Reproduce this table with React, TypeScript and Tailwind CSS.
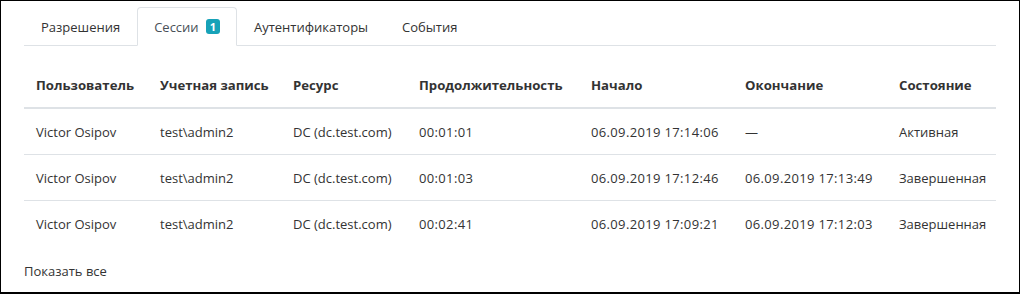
const tabs = [
  { label: "Разрешения" },
  { label: "Сессии", badge: 1, active: true },
  { label: "Аутентификаторы" },
  { label: "События" },
];

const columns = [
  { title: "Пользователь", width: "w-[124px]" },
  { title: "Учетная запись", width: "w-[133px]" },
  { title: "Ресурс", width: "w-[126px]" },
  { title: "Продолжительность", width: "w-[172px]" },
  { title: "Начало", width: "w-[154px]" },
  { title: "Окончание", width: "w-[154px]" },
  { title: "Состояние", width: "" },
];

const sessions = [
  ["Victor Osipov", "test\\admin2", "DC (dc.test.com)", "00:01:01", "06.09.2019 17:14:06", "—", "Активная"],
  ["Victor Osipov", "test\\admin2", "DC (dc.test.com)", "00:01:03", "06.09.2019 17:12:46", "06.09.2019 17:13:49", "Завершенная"],
  ["Victor Osipov", "test\\admin2", "DC (dc.test.com)", "00:02:41", "06.09.2019 17:09:21", "06.09.2019 17:12:03", "Завершенная"],
];

// digit columns render a bit wider in the original font
const numericCols = [3, 4, 5];

export default function App() {
  return (
    <div className="h-[294px] w-[1020px] overflow-hidden border-t border-l border-r border-b-2 border-black bg-white px-[23px] pt-[6px] font-['Open_Sans',sans-serif] text-[13px] text-[#333]">
      <ul className="flex border-b border-[#dee2e6]">
        {tabs.map((tab) => (
          <li
            key={tab.label}
            className={`-mb-px flex h-[39px] items-center gap-[7px] rounded-t border px-4 pt-[2px] ${
              tab.active
                ? "border-[#dee2e6] border-b-white bg-white text-[#495057]"
                : "border-transparent text-[#333]"
            }`}
          >
            <span>{tab.label}</span>
            {tab.badge ? (
              <span className="-mt-[2px] flex h-[15px] min-w-[14px] items-center justify-center rounded-[3px] bg-[#17a2b8] px-1 text-[11px] font-bold leading-none text-white">
                {tab.badge}
              </span>
            ) : null}
          </li>
        ))}
      </ul>

      <table className="mt-[19px] w-full table-fixed border-collapse text-left">
        <thead>
          <tr className="border-b-2 border-[#dee2e6]">
            {columns.map((col) => (
              <th
                key={col.title}
                className={`h-[43px] whitespace-nowrap px-3 align-middle text-[13.2px] font-bold text-[#333] ${col.width}`}
              >
                {col.title}
              </th>
            ))}
          </tr>
        </thead>
        <tbody>
          {sessions.map((row, i) => (
            <tr key={i} className={i > 0 ? "border-t border-[#dee2e6]" : ""}>
              {row.map((cell, j) => (
                <td
                  key={j}
                  className={`h-[46px] whitespace-nowrap px-3 pt-[3px] align-middle ${
                    numericCols.includes(j) ? "tracking-[0.35px]" : ""
                  }`}
                >
                  {cell}
                </td>
              ))}
            </tr>
          ))}
        </tbody>
      </table>

      <a className="mt-[16px] block text-[#333]">Показать все</a>
    </div>
  );
}
